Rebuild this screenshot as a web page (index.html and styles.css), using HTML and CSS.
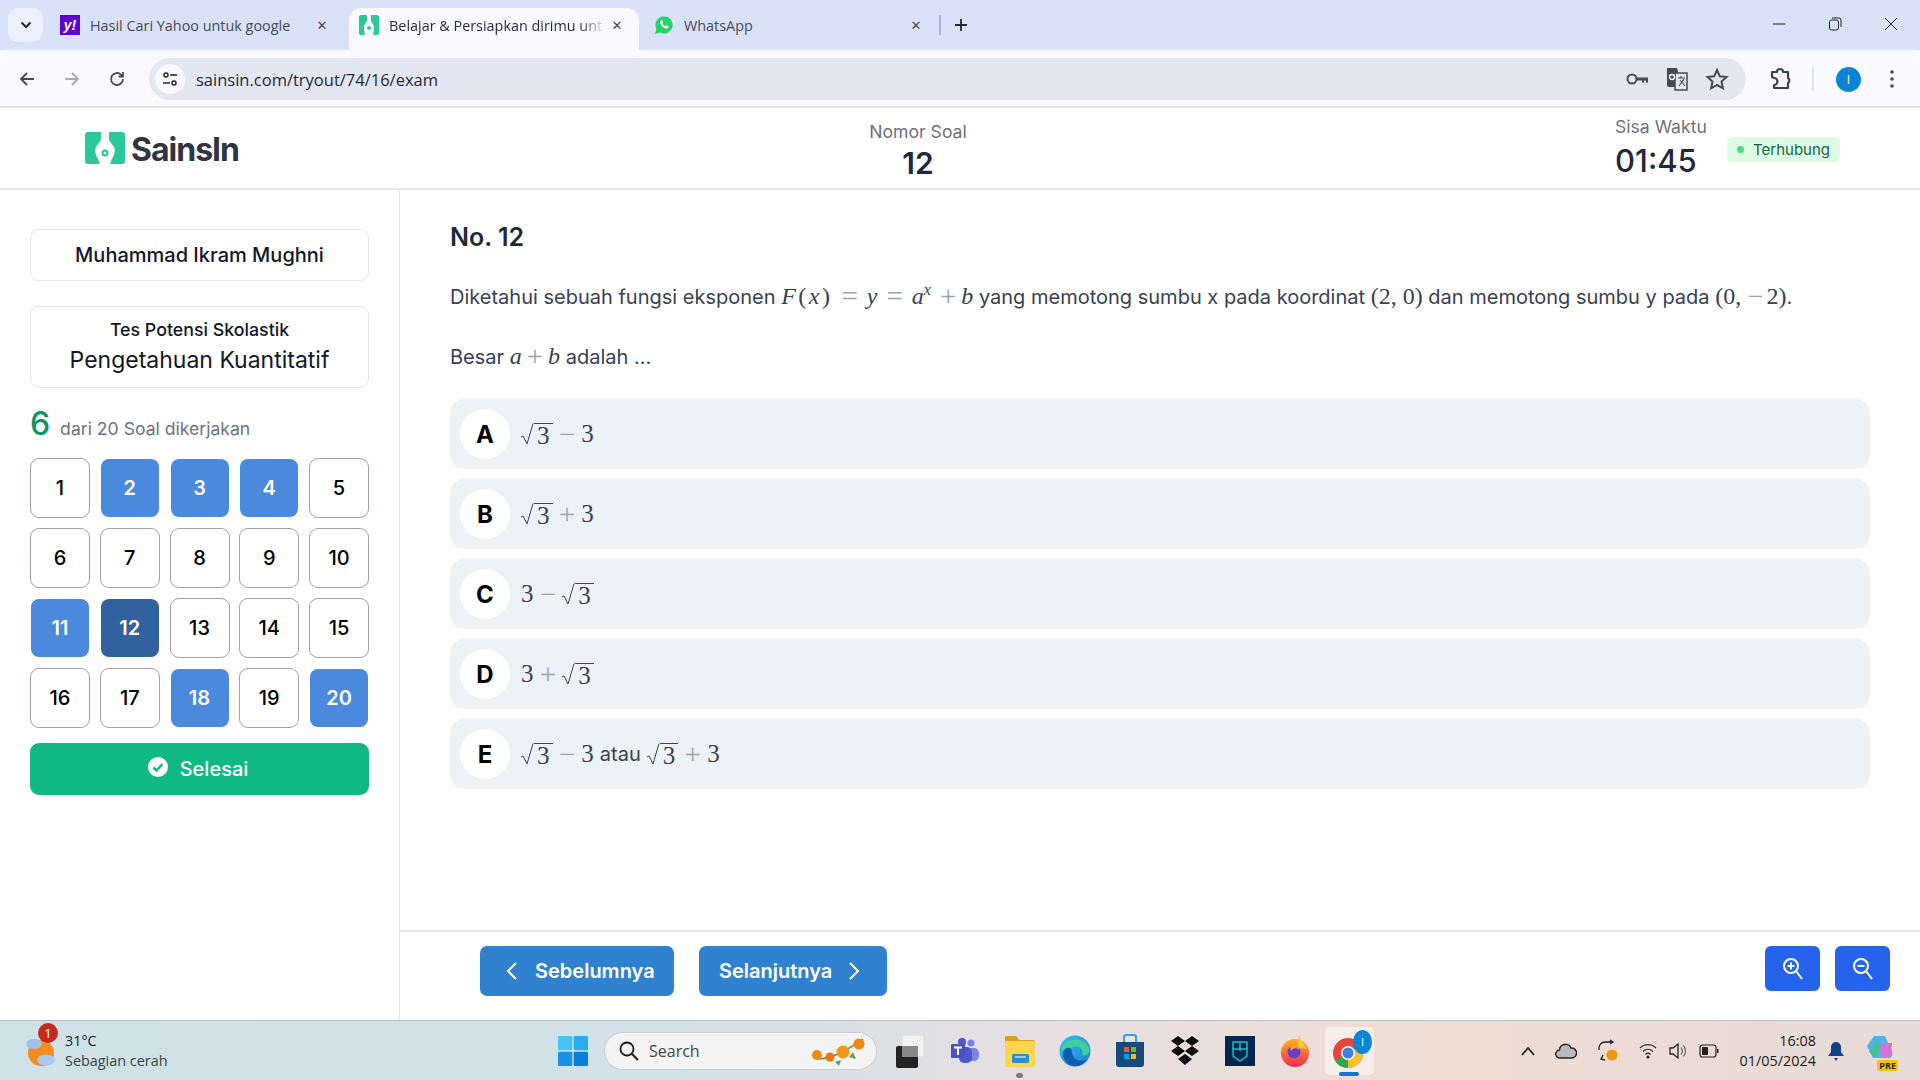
FILE: index.html

```html
<!DOCTYPE html>
<html lang="id">
<head>
  <meta charset="UTF-8" />
  <meta name="viewport" content="width=device-width, initial-scale=1.0"/>
  <title>SainsIn Tryout</title>
  <link rel="stylesheet" href="styles.css">
</head>
<body>
  <!-- browser tabs -->
  <div class="tabstrip">
    <div class="tab-menu"><svg width="12" height="8" viewBox="0 0 12 8"><path d="M1.5 1.5 6 6l4.5-4.5" fill="none" stroke="#1f2937" stroke-width="2"/></svg></div>
    <div class="tab tab-first">
      <span class="fav fav-yahoo">y!</span>
      <span class="tab-title">Hasil Cari Yahoo untuk google</span>
      <span class="tab-x">✕</span>
    </div>
    <div class="tab tab-active">
      <svg class="fav" viewBox="0 0 20 20"><rect width="20" height="20" rx="2" fill="#2bc999"/><path d="M8 0h4v6l3 5v3l-1 6H6l-1-6v-3l3-5z" fill="#fff"/><circle cx="10" cy="13" r="2" fill="#2bc999"/></svg>
      <span class="tab-title tab-fade">Belajar &amp; Persiapkan dirimu unt</span>
      <span class="tab-x">✕</span>
    </div>
    <div class="tab">
      <svg class="fav" viewBox="0 0 20 20"><path d="M1 19l1.4-5A8.6 8.6 0 1 1 6 17.6z" fill="#25d366"/><path d="M7 5.5c-1 .6-1.3 2-.5 3.6 1 1.9 2.600 3.400 4.500 4.200 1.600.6 2.900.2 3.400-.9l.2-1.100-2.300-1.100-1 1.200c-1.200-.5-2.300-1.600-2.900-2.800l.8-1-1-2.300z" fill="#fff"/></svg>
      <span class="tab-title">WhatsApp</span>
      <span class="tab-x">✕</span>
    </div>
    <span class="tab-sep"></span>
    <span class="tab-plus"><svg width="14" height="14" viewBox="0 0 14 14"><path d="M7 1v12M1 7h12" stroke="#1f2937" stroke-width="1.800"/></svg></span>
    <div class="win-btns">
      <svg width="14" height="14" viewBox="0 0 14 14"><path d="M1 7h12" stroke="#222" stroke-width="1"/></svg>
      <svg width="14" height="14" viewBox="0 0 14 14"><rect x="1.500" y="3" width="9" height="10" rx="2" fill="none" stroke="#222"/><path d="M4 1h7a2 2 0 0 1 2 2v7" fill="none" stroke="#222"/></svg>
      <svg width="14" height="14" viewBox="0 0 14 14"><path d="M1 1l12 12M13 1 1 13" stroke="#222"/></svg>
    </div>
  </div>

  <!-- address bar -->
  <div class="toolbar">
    <svg class="nav-icon" viewBox="0 0 18 18"><path d="M16 9H3M9 3 3 9l6 6" fill="none" stroke="#444b57" stroke-width="1.800"/></svg>
    <svg class="nav-icon" viewBox="0 0 18 18"><path d="M2 9h13M9 3l6 6-6 6" fill="none" stroke="#a6a9b0" stroke-width="1.800"/></svg>
    <svg class="nav-icon" viewBox="0 0 18 18"><path d="M15 9a6 6 0 1 1-1.800-4.300L15 6.500M15 2v4.500h-4.500" fill="none" stroke="#444b57" stroke-width="1.800"/></svg>
    <div class="omnibox">
      <span class="site-btn"><svg width="16" height="16" viewBox="0 0 16 16"><circle cx="4" cy="4" r="2" fill="none" stroke="#222" stroke-width="1.500"/><path d="M8 4h7M1 12h7" stroke="#222" stroke-width="1.500"/><circle cx="12" cy="12" r="2" fill="none" stroke="#222" stroke-width="1.500"/></svg></span>
      <span class="url">sainsin.com/tryout/74/16/exam</span>
      <svg class="omni-icon" viewBox="0 0 24 24"><circle cx="7" cy="12" r="4.500" fill="none" stroke="#444b57" stroke-width="2"/><path d="M11.500 10.500H23v5h-2v-2h-2v2h-2v-2h-5.500z" fill="#444b57"/></svg>
      <svg class="omni-icon" viewBox="0 0 24 24"><path d="M2 1h10l1 3 0 16H4a2 2 0 0 1-2-2z" fill="#444b57"/><rect x="10" y="6" width="12" height="17" fill="#e4e7f2" stroke="#444b57" stroke-width="1.500"/><circle cx="7" cy="10" r="2.500" fill="none" stroke="#fff" stroke-width="1.300"/><path d="M13 11h7M16 9v2M14 19l5-7M15 13l5 6" stroke="#444b57" stroke-width="1.100"/></svg>
      <svg class="omni-icon" viewBox="0 0 24 24"><path d="M12 3l2.800 6.300 6.700.7-5 4.600 1.400 6.700-5.900-3.500-5.900 3.500 1.400-6.700-5-4.600 6.700-.7z" fill="none" stroke="#444b57" stroke-width="2"/></svg>
    </div>
    <svg class="ext-icon" viewBox="0 0 24 24"><path d="M4 5h5a3 3 0 0 1 6 0h5v6a3 3 0 0 1 0 5v5H6v-3a3 3 0 0 0 0-7l-2-1z" fill="none" stroke="#394150" stroke-width="2.200" stroke-linejoin="round"/></svg>
    <span class="bar-sep"></span>
    <span class="avatar">I</span>
    <svg class="dots" width="4" height="18" viewBox="0 0 4 18"><circle cx="2" cy="2" r="1.800" fill="#444b57"/><circle cx="2" cy="9" r="1.800" fill="#444b57"/><circle cx="2" cy="16" r="1.800" fill="#444b57"/></svg>
  </div>

  <!-- page header -->
  <header class="page-head">
    <div class="brand">
      <svg width="40" height="32" viewBox="0 0 40 32"><path d="M3 0h13v8l-5 7c-1.500 3-.5 8 2 12l2 5H3a3 3 0 0 1-3-3V3a3 3 0 0 1 3-3zM24 0h13a3 3 0 0 1 3 3v26a3 3 0 0 1-3 3H25l2-5c2.500-4 3.500-9 2-12l-5-7z" fill="#2bc999"/><circle cx="20" cy="21" r="3.500" fill="#2bc999"/><circle cx="20" cy="21" r="1.300" fill="#fff"/></svg>
      <span class="brand-name">SainsIn</span>
    </div>
    <div class="head-num">
      <div class="head-label">Nomor Soal</div>
      <div class="head-big">12</div>
    </div>
    <div class="head-time">
      <div class="head-label">Sisa Waktu</div>
      <div class="head-big head-clock">01:45</div>
    </div>
    <div class="badge"><span class="badge-dot"></span>Terhubung</div>
  </header>

  <div class="content">
    <aside class="sidebar">
      <div class="card card-name">Muhammad Ikram Mughni</div>
      <div class="card card-test">
        <div class="test-kind">Tes Potensi Skolastik</div>
        <div class="test-name">Pengetahuan Kuantitatif</div>
      </div>
      <div class="progress"><span class="progress-num">6</span> dari 20 Soal dikerjakan</div>
      <div class="grid">
        <div class="number">1</div>
        <div class="number done">2</div>
        <div class="number done">3</div>
        <div class="number done">4</div>
        <div class="number">5</div>
        <div class="number">6</div>
        <div class="number">7</div>
        <div class="number">8</div>
        <div class="number">9</div>
        <div class="number">10</div>
        <div class="number done">11</div>
        <div class="number current">12</div>
        <div class="number">13</div>
        <div class="number">14</div>
        <div class="number">15</div>
        <div class="number">16</div>
        <div class="number">17</div>
        <div class="number done">18</div>
        <div class="number">19</div>
        <div class="number done">20</div>
      </div>
      <button class="finish">
        <svg width="20" height="20" viewBox="0 0 20 20"><circle cx="10" cy="10" r="10" fill="#fff"/><path d="M5.500 10.500l3 3 6-6.500" fill="none" stroke="#10b981" stroke-width="2.500"/></svg>
        Selesai
      </button>
    </aside>

    <main class="main">
      <div class="question">
        <h2 class="q-title">No. 12</h2>
        <p class="q-text">Diketahui sebuah fungsi eksponen <span class="m"><span class="fn"><i>F</i>(<i>x</i>)</span><b class="rel">=</b><i>y</i><b class="rel">=</b><i>a<sup>x</sup></i> <b class="op">+</b> <i>b</i></span> yang memotong sumbu x pada koordinat <span class="m">(2, 0)</span> dan memotong sumbu y pada <span class="m">(0, <b class="op op-neg">−</b>2)</span>.</p>
        <p class="q-text q-second">Besar <span class="m"><i>a</i> <b class="op">+</b> <i>b</i></span> adalah ...</p>

        <div class="option"><span class="letter">A</span><span class="m"><span class="sqrt"><svg class="rad" viewBox="0 0 13 24"><path d="M0 14l2-1 4 8L12 .5" fill="none" stroke="#374151" stroke-width="1"/></svg><span class="rad-in">3</span></span> <b class="op">−</b> 3</span></div>
        <div class="option"><span class="letter">B</span><span class="m"><span class="sqrt"><svg class="rad" viewBox="0 0 13 24"><path d="M0 14l2-1 4 8L12 .5" fill="none" stroke="#374151" stroke-width="1"/></svg><span class="rad-in">3</span></span> <b class="op">+</b> 3</span></div>
        <div class="option"><span class="letter">C</span><span class="m">3 <b class="op">−</b> <span class="sqrt"><svg class="rad" viewBox="0 0 13 24"><path d="M0 14l2-1 4 8L12 .5" fill="none" stroke="#374151" stroke-width="1"/></svg><span class="rad-in">3</span></span></span></div>
        <div class="option"><span class="letter">D</span><span class="m">3 <b class="op">+</b> <span class="sqrt"><svg class="rad" viewBox="0 0 13 24"><path d="M0 14l2-1 4 8L12 .5" fill="none" stroke="#374151" stroke-width="1"/></svg><span class="rad-in">3</span></span></span></div>
        <div class="option"><span class="letter">E</span><span class="m"><span class="sqrt"><svg class="rad" viewBox="0 0 13 24"><path d="M0 14l2-1 4 8L12 .5" fill="none" stroke="#374151" stroke-width="1"/></svg><span class="rad-in">3</span></span> <b class="op">−</b> 3</span><span class="or">atau</span><span class="m"><span class="sqrt"><svg class="rad" viewBox="0 0 13 24"><path d="M0 14l2-1 4 8L12 .5" fill="none" stroke="#374151" stroke-width="1"/></svg><span class="rad-in">3</span></span> <b class="op">+</b> 3</span></div>
      </div>

      <div class="foot">
        <button class="nav-btn nav-prev"><svg width="12" height="18" viewBox="0 0 12 18"><path d="M10 1 2 9l8 8" fill="none" stroke="#fff" stroke-width="2"/></svg>Sebelumnya</button>
        <button class="nav-btn nav-next">Selanjutnya<svg width="12" height="18" viewBox="0 0 12 18"><path d="M2 1l8 8-8 8" fill="none" stroke="#fff" stroke-width="2"/></svg></button>
        <button class="zoom-btn zoom-first"><svg width="22" height="24" viewBox="0 0 22 24"><circle cx="9" cy="9" r="7" fill="none" stroke="#fff" stroke-width="2"/><path d="M14 14l6 8M9 5.500v7M5.500 9h7" stroke="#fff" stroke-width="2"/></svg></button>
        <button class="zoom-btn"><svg width="22" height="24" viewBox="0 0 22 24"><circle cx="9" cy="9" r="7" fill="none" stroke="#fff" stroke-width="2"/><path d="M14 14l6 8M5.500 9h7" stroke="#fff" stroke-width="2"/></svg></button>
      </div>
    </main>
  </div>

  <!-- windows taskbar -->
  <footer class="taskbar">
    <div class="weather">
      <svg width="32" height="36" viewBox="0 0 32 36"><circle cx="16" cy="20" r="13" fill="#f28c1e"/><ellipse cx="9" cy="11" rx="8" ry="5" fill="#9fc0e6"/><ellipse cx="21" cy="27" rx="9" ry="5.500" fill="#a9c8ea"/></svg>
      <span class="weather-badge">1</span>
      <div class="weather-text">
        <div>31°C</div>
        <div class="weather-sub">Sebagian cerah</div>
      </div>
    </div>
    <svg class="win-logo" width="30" height="30" viewBox="0 0 30 30"><rect width="14.300" height="14.300" rx="1" fill="#47c4f5"/><rect x="15.700" width="14.300" height="14.300" rx="1" fill="#28aef0"/><rect y="15.700" width="14.300" height="14.300" rx="1" fill="#1793e2"/><rect x="15.700" y="15.700" width="14.300" height="14.300" rx="1" fill="#0a7fd8"/></svg>
    <div class="search">
      <svg width="20" height="20" viewBox="0 0 20 20"><circle cx="8" cy="8" r="6.500" fill="none" stroke="#1b1b1b" stroke-width="1.800"/><path d="M13 13l6 6" stroke="#1b1b1b" stroke-width="2"/></svg>
      <span class="search-text">Search</span>
      <svg class="flowers" width="60" height="32" viewBox="0 0 60 32"><path d="M8 24C24 24 40 14 54 4" stroke="#5f8f3a" stroke-width="1.500" fill="none"/><circle cx="8" cy="20" r="5" fill="#ef8a12"/><circle cx="21" cy="22" r="4.500" fill="#e9760f"/><circle cx="34" cy="17" r="6.500" fill="#f09a16"/><circle cx="50" cy="9" r="5.500" fill="#ee8712"/><path d="M26 27l4 4 2-6zM40 22l7 2-3-7z" fill="#6da244"/></svg>
    </div>
    <div class="apps">
      <span class="app"><svg width="32" height="36" viewBox="0 0 32 36"><rect x="8" y="2" width="22" height="22" rx="2" fill="#f2f2f2" stroke="#ddd"/><rect x="2" y="13" width="22" height="22" rx="2" fill="#222"/><rect x="8" y="13" width="16" height="11" fill="#888"/></svg></span>
      <span class="app"><svg width="30" height="30" viewBox="0 0 30 30"><circle cx="21" cy="7" r="3.500" fill="#7b83eb"/><rect x="15" y="12" width="14" height="13" rx="5" fill="#7b83eb"/><circle cx="12" cy="6" r="4" fill="#5059c9"/><rect x="9" y="11" width="13" height="16" rx="5" fill="#5059c9"/><rect x="1" y="8" width="14" height="14" rx="1" fill="#4b53bc"/><path d="M4 11.500h8M8 11.500V19" stroke="#fff" stroke-width="2"/></svg></span>
      <span class="app app-dot"><svg width="32" height="32" viewBox="0 0 32 32"><path d="M1 3a2 2 0 0 1 2-2h9l3 4h14a2 2 0 0 1 2 2v4H1z" fill="#dc9f18"/><rect x="1" y="6" width="30" height="26" rx="2" fill="#fbd750"/><rect x="8" y="19" width="17" height="9" rx="1.500" fill="#2a8fd4"/><path d="M11 22h11" stroke="#bfe2f7" stroke-width="1.500"/></svg></span>
      <span class="app"><svg width="32" height="32" viewBox="0 0 32 32"><defs><linearGradient id="edgeA" x1="0" y1="0" x2="1" y2="1"><stop offset="0" stop-color="#35c1f1"/><stop offset="1" stop-color="#1b7fce"/></linearGradient></defs><circle cx="16" cy="16" r="15.500" fill="url(#edgeA)"/><path d="M2 14C5 3 24 0 30 13c2 6-3 8-7 7 2-7-4-10-9-8-6 2-8 6-12 2z" fill="#3dd09f"/><path d="M13 17c0 7 8 11 15 7-3 5-9 8-14 7C6 29 3 22 4 17c3-6 9-5 9 0z" fill="#0f5dae"/></svg></span>
      <span class="app"><svg width="30" height="34" viewBox="0 0 30 34"><path d="M9 8V3a2 2 0 0 1 2-2h8a2 2 0 0 1 2 2v5" fill="none" stroke="#2aa7e0" stroke-width="2"/><path d="M1 8h28v22a3 3 0 0 1-3 3H4a3 3 0 0 1-3-3z" fill="#17497d"/><rect x="9" y="13" width="5" height="5" fill="#ef5a29"/><rect x="16" y="13" width="5" height="5" fill="#7fba00"/><rect x="9" y="20" width="5" height="5" fill="#00a4ef"/><rect x="16" y="20" width="5" height="5" fill="#ffb900"/></svg></span>
      <span class="app"><svg width="32" height="32" viewBox="0 0 32 32"><path d="M9 1l7 5-7 5-7-5zM23 1l7 5-7 5-7-5zM9 11l7 5-7 5-7-5zM23 11l7 5-7 5-7-5zM16 19l7 5-7 6-7-6z" fill="#0b0b0b"/></svg></span>
      <span class="app"><svg width="30" height="30" viewBox="0 0 30 30"><rect width="30" height="30" fill="#04254d"/><path d="M8 6h14v14l-7 5-7-5zM15 6v9M8 13h14" fill="none" stroke="#1dbdc1" stroke-width="1.500"/></svg></span>
      <span class="app"><svg width="32" height="32" viewBox="0 0 32 32"><defs><linearGradient id="foxA" x1="0" y1="0" x2="0" y2="1"><stop offset="0" stop-color="#ffb01f"/><stop offset="1" stop-color="#f0295a"/></linearGradient></defs><circle cx="16" cy="18" r="14" fill="url(#foxA)"/><path d="M20 1c3 6 6 8 8 13l-10-1z" fill="#ffc83a"/><circle cx="15" cy="17" r="6.500" fill="#6a3fc4"/><path d="M10 8c5-2 10 2 10 7-3-3-6-2-8 1z" fill="#ff9a1f"/></svg></span>
      <span class="app app-chrome">
        <svg width="34" height="36" viewBox="0 0 34 36"><circle cx="15" cy="20" r="15" fill="#e5463a"/><path d="M15 20 2 27.500A15 15 0 0 0 15 35z" fill="#2ea84f"/><path d="M15 20 28 12.500A15 15 0 0 1 15 35z" fill="#fbc02d"/><circle cx="15" cy="20" r="7" fill="#fff"/><circle cx="15" cy="20" r="5.500" fill="#3b82e8"/></svg>
        <span class="chrome-badge">I</span>
      </span>
    </div>
    <div class="tray">
      <svg width="14" height="10" viewBox="0 0 14 10"><path d="M1 9l6-7 6 7" fill="none" stroke="#1b1b1b" stroke-width="1.600"/></svg>
      <svg class="t-wide" width="22" height="18" viewBox="0 0 22 18"><path d="M5 16a4 4 0 0 1-.5-8 6 6 0 0 1 11.500-2 5 5 0 0 1 1 10z" fill="#bbb" stroke="#222" stroke-width="1.400"/></svg>
      <svg class="t-wide" width="22" height="24" viewBox="0 0 22 24"><path d="M2 11V9a6 6 0 0 1 6-6h8M13 1l3 2-3 2M8 21l-4-1 2-4" fill="none" stroke="#222" stroke-width="1.300"/><circle cx="15" cy="16" r="5.500" fill="#f0960e"/></svg>
      <svg class="t-wide" width="18" height="18" viewBox="0 0 18 18"><path d="M1 6c4.500-4.500 11.500-4.500 16 0M4 9.500c3-3 7-3 10 0M6.500 12.500c1.500-1.500 3.500-1.500 5 0" fill="none" stroke="#333" stroke-width="1.200"/><circle cx="9" cy="15" r="1.500" fill="#222"/></svg>
      <svg class="t-near" width="20" height="20" viewBox="0 0 20 20"><path d="M2 7h3l5-4v14l-5-4H2z" fill="none" stroke="#222" stroke-width="1.300"/><path d="M13 6.500c1.500 2 1.500 5 0 7M15.500 4.500c2.500 3 2.500 8 0 11" fill="none" stroke="#555" stroke-width="1.100"/></svg>
      <svg class="t-near" width="20" height="14" viewBox="0 0 20 14"><rect x="1" y="1" width="16" height="12" rx="2.500" fill="none" stroke="#222" stroke-width="1.200"/><rect x="3" y="3" width="6" height="8" rx="1" fill="#222"/><rect x="18" y="5" width="1.500" height="4" fill="#222"/></svg>
      <div class="clock"><div>16:08</div><div>01/05/2024</div></div>
      <svg class="t-near" width="18" height="20" viewBox="0 0 18 20"><path d="M9 1a5 5 0 0 1 5 5v5l3 4H1l3-4V6a5 5 0 0 1 5-5zM7 17h4l-2 3z" fill="#14438c"/></svg>
      <span class="copilot">
        <svg width="30" height="30" viewBox="0 0 30 30"><path d="M9 2h11l7 16a4 4 0 0 1-4 6H8L2 12z" fill="#4fb3e8"/><path d="M15 9h12l-1 13-10 2z" fill="#d572d8"/><path d="M4 18l8-10 4 2-5 14z" fill="#3fc28c"/></svg>
        <span class="pre">PRE</span>
      </span>
    </div>
  </footer>
</body>
</html>
```

FILE: styles.css

```css
* { box-sizing: border-box; }
body { margin: 0; width: 1920px; height: 1080px; overflow: hidden; display: flex; flex-direction: column; background: #fff; font-family: "Inter", sans-serif; color: #1f2937; }
button { font-family: inherit; border: 0; cursor: pointer; }
p, h2 { margin: 0; }

/* browser tabs */
.tabstrip { height: 50px; flex: none; display: flex; align-items: flex-end; background: #d9e2f8; font-family: "Open Sans", sans-serif; font-size: 14.4px; color: #444b57; }
.tab-menu { width: 35px; height: 34px; margin: 0 0 8px 8px; border-radius: 10px; background: #eef1fc; display: flex; align-items: center; justify-content: center; }
.tab { width: 290px; height: 42px; margin-left: 5px; padding: 0 10px 8px; border-radius: 12px 12px 0 0; display: flex; align-items: center; }
.tab-first { width: 300px; margin-left: 6px; padding-left: 11px; }
.tab-active { width: 290px; margin-left: 0; background: #f9f9fe; color: #1f2937; }
.fav { width: 20px; height: 20px; flex: none; }
.fav-yahoo { background: #6001d2; color: #fff; font-family: "Liberation Sans", sans-serif; font-weight: 700; font-style: italic; font-size: 14px; line-height: 20px; text-align: center; }
.tab-title { width: 225px; margin-left: 10px; white-space: nowrap; overflow: hidden; }
.tab-fade { width: 221px; -webkit-mask-image: linear-gradient(to right, #000 86%, transparent 98%); mask-image: linear-gradient(to right, #000 86%, transparent 98%); }
.tab-x { font-size: 13px; width: 14px; text-align: center; font-family: "DejaVu Sans", sans-serif; color: #444b57; }
.tab-sep { width: 2px; height: 20px; margin: 0 0 15px 5px; background: #a9b6d8; }
.tab-plus { margin: 0 0 18px 13px; height: 14px; display: flex; }
.win-btns { margin: 0 0 19px auto; padding-right: 22px; display: flex; gap: 42px; }

/* address bar */
.toolbar { height: 58px; flex: none; display: flex; align-items: center; background: #f9f9fe; border-radius: 10px 10px 0 0; border-bottom: 2px solid #e3e3ea; padding: 2px 0 0 18px; }
.nav-icon { width: 18px; height: 18px; margin-right: 27px; }
.omnibox { width: 1597px; height: 42px; margin-left: -4px; padding: 0 17px 0 6px; background: #e4e7f2; border-radius: 21px; display: flex; align-items: center; }
.site-btn { width: 30px; height: 30px; border-radius: 50%; background: #f9f9fe; display: flex; align-items: center; justify-content: center; }
.url { margin-left: 11px; flex: 1; font-family: "Open Sans", sans-serif; font-size: 16.5px; color: #1f2937; }
.omni-icon { width: 24px; height: 24px; margin-left: 16px; }
.ext-icon { width: 24px; height: 24px; margin-left: 22px; }
.bar-sep { width: 2px; height: 24px; margin-left: 20px; background: #d9e2f8; }
.avatar { width: 25px; height: 25px; margin-left: 22px; border-radius: 50%; background: #0a84d6; color: #fff; font-size: 12px; line-height: 25px; text-align: center; font-family: "Open Sans", sans-serif; }
.dots { margin-left: 29px; }

/* page header */
.page-head { height: 82px; flex: none; display: flex; align-items: center; border-bottom: 2px solid #e5e7eb; }
.brand { width: 868px; padding-left: 85px; display: flex; align-items: center; gap: 6px; }
.brand-name { padding-top: 2px; font-family: "Inter", sans-serif; font-weight: 700; font-size: 32px; letter-spacing: -1px; color: #2f3542; }
.head-num { width: 100px; margin-top: 4px; text-align: center; }
.head-time { margin-left: 647px; margin-top: -3px; width: 112px; }
.head-label { font-size: 17.6px; line-height: 26px; color: #6b7280; white-space: nowrap; }
.head-big { font-size: 30px; line-height: 36px; font-weight: 600; color: #1f2937; }
.head-clock { margin-top: 3px; font-size: 31px; font-weight: 500; }
.badge { height: 25px; width: 113px; margin-top: 2px; border-radius: 5px; background: #dcfce7; color: #166534; font-size: 15px; display: flex; align-items: center; justify-content: center; gap: 9px; }
.badge-dot { width: 7px; height: 7px; border-radius: 50%; background: #4ade80; }

.content { flex: 1; min-height: 0; display: flex; }

/* sidebar */
.sidebar { width: 400px; flex: none; padding: 39px 30px 0; border-right: 1px solid #e2e8f0; }
.card { border: 1px solid #e5e7eb; border-radius: 9px; text-align: center; color: #111827; }
.card-name { height: 52px; line-height: 50px; font-size: 20px; font-weight: 500; }
.card-test { height: 82px; margin-top: 25px; padding-top: 10px; }
.test-kind { font-size: 17.8px; line-height: 26px; font-weight: 500; }
.test-name { font-size: 23px; line-height: 34px; }
.progress { height: 70px; padding-top: 16px; font-size: 17.6px; color: #6b7280; }
.progress-num { font-size: 32px; font-weight: 500; color: #059669; margin-right: 5px; }
.grid { display: grid; grid-template-columns: repeat(5, 60px); justify-content: space-between; row-gap: 10px; }
.number { height: 60px; background: #fff; border: 1px solid #a89ea0; border-radius: 9px; display: flex; align-items: center; justify-content: center; font-size: 20px; font-weight: 500; color: #000; }
.done { background: #4a89dc; background-clip: padding-box; border-color: transparent; color: #fff; font-weight: 600; }
.current { background: #31629d; background-clip: padding-box; border-color: transparent; color: #fff; font-weight: 600; }
.finish { width: 339px; height: 52px; margin-top: 15px; padding: 0 9px 0 6px; border-radius: 9px; background: #10b981; color: #fff; font-size: 20px; font-weight: 500; display: flex; align-items: center; justify-content: center; gap: 12px; }
.finish svg { margin-top: -4px; }

/* question */
.main { flex: 1; min-width: 0; display: flex; flex-direction: column; }
.question { flex: 1; padding: 31px 50px 0; }
.q-title { font-size: 25px; line-height: 32px; font-weight: 600; color: #1f2937; }
.q-text { height: 30px; margin-top: 28px; font-size: 20px; line-height: 30px; color: #374151; white-space: nowrap; }
.q-second { margin-top: 30px; margin-bottom: 28px; }
.m { font-family: "Liberation Serif", serif; font-size: 24px; color: #374151; white-space: nowrap; }
.m sup { font-size: 16px; line-height: 0; margin-right: 4px; }
.fn { letter-spacing: 2.500px; }
.op { margin: 0 -1px; font-size: 29px; line-height: 0; vertical-align: -2px; font-weight: 400; color: #9ca3af; }
.op-neg { margin: 0 3px 0 0; }
.rel { margin: 0 9px; font-size: 29px; line-height: 0; vertical-align: -2px; font-weight: 400; color: #9ca3af; }
.option { height: 70px; margin-bottom: 10px; padding-left: 10px; border-radius: 14px; background: #edf2f7; display: flex; align-items: center; }
.option .m { font-size: 25px; }
.option .op { margin: 0; }
.letter { width: 50px; height: 50px; margin-right: 11px; border-radius: 50%; background: #fff; display: flex; align-items: center; justify-content: center; font-size: 24px; font-weight: 700; color: #000; }
.or { margin: 0 6px; font-size: 20px; color: #374151; }
.sqrt { display: inline-flex; align-items: flex-start; vertical-align: -4.500px; }
.rad { width: 13px; height: 24px; }
.rad-in { border-top: 1px solid #374151; line-height: 23px; padding: 0 3px; }

/* bottom buttons */
.foot { height: 90px; flex: none; padding: 14px 30px 0 80px; border-top: 2px solid #e5e7eb; display: flex; align-items: flex-start; }
.nav-btn { height: 50px; border-radius: 7px; background: #3182ce; color: #fff; font-size: 20px; font-weight: 600; display: flex; align-items: center; }
.nav-prev { width: 194px; padding-left: 26px; gap: 17px; margin-right: 25px; }
.nav-next { width: 188px; padding-left: 20px; gap: 16px; }
.zoom-btn { width: 55px; height: 45px; margin-left: 15px; border-radius: 6px; background: #2563eb; display: flex; align-items: center; justify-content: center; }
.zoom-first { margin-left: auto; }

/* taskbar */
.taskbar { height: 60px; flex: none; display: flex; align-items: center; border-top: 1px solid #b9bfc2; background: linear-gradient(to right, #cfe2e8 0%, #d3e2e8 35%, #e7dfe2 55%, #efddd3 75%, #e8dbd9 100%); font-family: "Open Sans", sans-serif; color: #1b1b1b; }
.weather { position: relative; width: 558px; flex: none; padding-left: 25px; display: flex; align-items: center; gap: 8px; font-size: 14.4px; line-height: 20px; }
.weather-sub { color: #3c4043; }
.weather-badge { position: absolute; left: 38px; top: -8px; width: 20px; height: 20px; border-radius: 50%; background: #c42b1c; color: #fff; font-size: 13px; line-height: 20px; text-align: center; }
.win-logo { flex: none; }
.search { width: 273px; height: 38px; margin-left: 16px; padding: 0 7px 0 14px; flex: none; border-radius: 19px; background: #f5f4f4; border: 1px solid #cfcfcf; display: flex; align-items: center; font-size: 16px; color: #444; }
.search-text { margin-left: 10px; flex: 1; }
.apps { display: flex; flex: none; margin-left: 5px; }
.app { position: relative; width: 55px; height: 60px; display: flex; align-items: center; justify-content: center; }
.app-dot::after { content: ""; position: absolute; bottom: 3px; left: 24px; width: 7px; height: 5px; border-radius: 3px; background: #7b7b7b; }
.app-chrome::before { content: ""; position: absolute; left: 3px; top: 6px; width: 49px; height: 48px; border-radius: 5px; background: #f6efe9; }
.app-chrome::after { content: ""; position: absolute; bottom: 5px; left: 17px; width: 20px; height: 4px; border-radius: 2px; background: #0a78d4; }
.app-chrome svg { position: relative; }
.chrome-badge { position: absolute; left: 31px; top: 9px; width: 19px; height: 24px; border-radius: 50%; background: #0a84d6; color: #fff; font-size: 11px; line-height: 24px; text-align: center; }
.tray { flex: 1; min-width: 0; display: flex; align-items: center; padding-left: 144px; }
.t-wide { margin-left: 20px; }
.t-near { margin-left: 11px; }
.clock { width: 84px; margin-left: 13px; text-align: right; font-size: 14.4px; line-height: 20px; white-space: nowrap; }
.copilot { position: relative; width: 30px; height: 34px; margin-left: 20px; }
.pre { position: absolute; right: -3px; bottom: -3px; padding: 0 2px; background: #f7c600; color: #222; font-size: 9px; font-weight: 700; line-height: 11px; border-radius: 2px; }
```
